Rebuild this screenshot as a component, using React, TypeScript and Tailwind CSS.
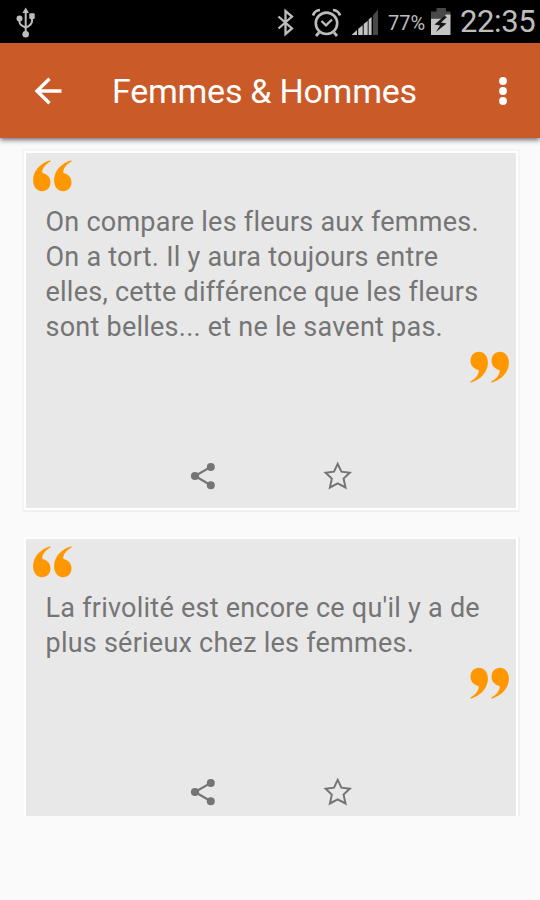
import React from "react";

function QuoteMark({ closing = false }: { closing?: boolean }) {
  const d =
    "M17.3 .3C7.2 3.2 .1 11 .1 20.2C.1 27 4 31.2 9.1 31.2C14 31.2 17.5 27.4 17.5 22.2C17.5 17.4 14.4 14.2 9.5 13C8.4 9.8 12 4.2 17.6 1.6Z";
  return (
    <svg width="39" height="32" viewBox="0 0 39 32" fill="#ff9800" className={closing ? "block rotate-180" : "block"}>
      <path d={d} />
      <path d={d} transform="translate(21 0)" />
    </svg>
  );
}

function ShareIcon() {
  return (
    <svg width="26" height="28" viewBox="0 0 26 28" className="block">
      <path d="M20.8 4.9L5 14l15.8 9.2" fill="none" stroke="#757575" strokeWidth="2.2" />
      <g fill="#757575">
        <circle cx="20.8" cy="4.9" r="4" />
        <circle cx="5" cy="14" r="4.1" />
        <circle cx="20.8" cy="23.2" r="4" />
      </g>
    </svg>
  );
}

function StarIcon() {
  return (
    <svg width="30" height="28" viewBox="0 0 30 28" className="block overflow-visible">
      <path
        d="M14.7 1.8L18.4 9.7L26.800 10.800L20.6 16.600L22.500 25.500L14.700 21.300L6.900 25.500L8.800 16.600L2.600 10.800L11 9.700Z"
        fill="none"
        stroke="#757575"
        strokeWidth="2"
      />
    </svg>
  );
}

function QuoteCard({ lines, className = "" }: { lines: string[]; className?: string }) {
  return (
    <article className={`w-[490px] bg-[#e8e8e8] ${className}`}>
      <div className="pl-[7px] pt-[7px]">
        <QuoteMark />
      </div>
      <p className="pl-[19.5px] pt-[13px] text-[27px] leading-[35px] tracking-[0.24px] text-[#757575]">
        {lines.map((line) => (
          <span key={line} className="block whitespace-nowrap">
            {line}
          </span>
        ))}
      </p>
      <div className="flex justify-end pr-[7.5px] pt-[6px]">
        <QuoteMark closing />
      </div>
      <div className="flex pl-[164px] pt-[79px]">
        <ShareIcon />
        <div className="ml-[107px]">
          <StarIcon />
        </div>
      </div>
    </article>
  );
}

function StatusBar() {
  return (
    <div className="flex h-[43px] bg-black text-[#bdbdbd]">
      <svg width="24" height="43" viewBox="0 0 24 43" className="ml-[14px]" fill="none" stroke="#bdbdbd" strokeWidth="2">
        <path d="M11.7 10V34M5.5 19V22Q5.5 25 11.7 27.5Q18 25 18 21V17" />
        <g fill="#bdbdbd" stroke="none">
          <path d="M11.7 7.5L15 13H8.4Z" />
          <circle cx="5.5" cy="18.5" r="3" />
          <rect x="15.3" y="13.3" width="5.4" height="5.8" rx="1" />
          <circle cx="11.7" cy="34.3" r="3.3" />
        </g>
      </svg>
      <svg width="130" height="43" viewBox="270 0 130 43" className="ml-[232px] shrink-0" fill="none" stroke="#bdbdbd">
        <path d="M278.5 16.5L292 28.5L285.5 34V11L292 16.5L278.5 28.5" strokeWidth="2.3" />
        <circle cx="326.5" cy="23.3" r="10.7" strokeWidth="2.6" />
        <path d="M321.5 21L326 25.3L332 19.5" strokeWidth="2.3" />
        <path d="M319 32.5L316 36M334 32.5L337 36M313 15.5Q314.5 10.5 320 10M333 10Q338.5 10.5 340 15.5" strokeWidth="2.7" />
        <g stroke="none" fill="#c4c4c4">
          <path d="M351.5 35L357 30V35Z" />
          <path d="M358.2 28.8L362.7 25.3V35H358.2Z" />
          <path d="M363.7 24L367.7 20.8V35H363.7Z" />
          <path d="M368.6 19.5L371.6 17V35H368.6Z" />
          <path d="M373 15.2L378 9.5V35H373Z" fill="#484848" />
        </g>
      </svg>
      <span className="-ml-[12px] mt-[10px] w-[37px] whitespace-nowrap text-[20px] leading-[26px]">77%</span>
      <svg width="22" height="43" viewBox="430 0 22 43" className="ml-[5px] shrink-0">
        <path d="M431 18V11.5H436.500V8H446V11.5H450.500V18Z" fill="#484848" />
        <path d="M431 18.500H443L446 14.500H450.500V35H431Z" fill="#c4c4c4" />
        <path d="M444.500 16L434.500 24.500L440 25.500L436 32L446.500 23.500L441 22.500L447 17Z" fill="#151515" />
      </svg>
      <span className="ml-[8px] mt-[4px] whitespace-nowrap text-[31px] leading-[36px] tracking-[-0.4px]">22:35</span>
    </div>
  );
}

export default function App() {
  return (
    <div className="h-[900px] w-[540px] overflow-hidden bg-[#fafafa] font-['Roboto',sans-serif]">
      <StatusBar />
      <header className="relative flex h-[95px] items-center bg-[#cb5a29] text-white shadow-[0_2px_5px_rgba(40,30,50,0.65)]">
        <svg width="30" height="30" viewBox="0 0 30 30" className="ml-[33px]" fill="none" stroke="white" strokeWidth="3.4">
          <path d="M28.500 15H3.500M16.500 2.800L4 15L16.500 27.200" />
        </svg>
        <h1 className="ml-[49px] w-[310px] whitespace-nowrap text-[34px] font-normal leading-[40px] tracking-[-0.25px]">Femmes &amp; Hommes</h1>
        <svg width="10" height="30" viewBox="0 0 10 30" className="ml-[76px]" fill="white">
          <circle cx="5" cy="5" r="3.900" />
          <circle cx="5" cy="15" r="3.900" />
          <circle cx="5" cy="25" r="3.900" />
        </svg>
      </header>
      <main className="flex flex-col gap-[31px] pl-[26px] pt-[15px]">
        <QuoteCard
          className="h-[355px] shadow-[0_0_0_2px_#fff,0_2px_0_2px_#f0f0f0,0_0_0_4px_#f4f4f4]"
          lines={[
            "On compare les fleurs aux femmes.",
            "On a tort. Il y aura toujours entre",
            "elles, cette différence que les fleurs",
            "sont belles... et ne le savent pas.",
          ]}
        />
        <QuoteCard
          className="h-[277px] shadow-[0_0_0_2px_#fff,2px_0_0_2px_#f0f0f0] [clip-path:inset(-4px_-4px_0_-4px)]"
          lines={["La frivolité est encore ce qu'il y a de", "plus sérieux chez les femmes."]}
        />
      </main>
    </div>
  );
}
